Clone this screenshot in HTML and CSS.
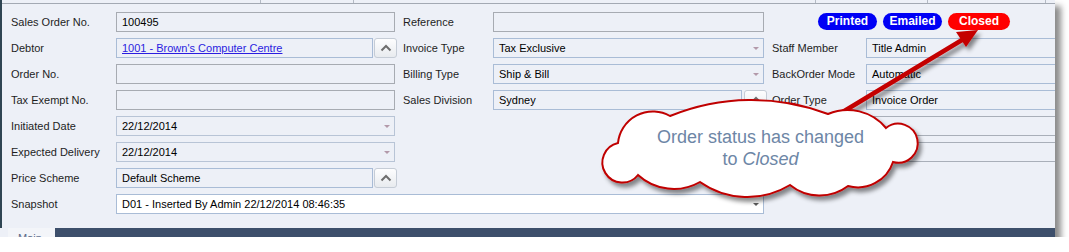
FILE: index.html
```html
<!DOCTYPE html>
<html>
<head>
<meta charset="utf-8">
<link rel="stylesheet" href="styles.css">
</head>
<body>
<div class="window">
  <div class="panel">
    <div class="tabtop">
      <span class="sep s1"></span><span class="sep s2"></span><span class="sep s3"></span><span class="sep s4"></span><span class="sep s5"></span>
    </div>
    <div class="form">
      <!-- row 1 -->
      <div class="lbl c1">Sales Order No.</div>
      <div class="box c2">100495</div>
      <div class="lbl c4">Reference</div>
      <div class="box c5"></div>
      <div class="badges">
        <span class="badge blue">Printed</span>
        <span class="badge blue">Emailed</span>
        <span class="badge red">Closed</span>
      </div>
      <!-- row 2 -->
      <div class="lbl c1">Debtor</div>
      <div class="c2 withbtn">
        <div class="box bl grow"><span class="link">1001 - Brown's Computer Centre</span></div>
        <div class="btn"><svg width="12" height="8" viewBox="0 0 12 8"><polyline points="1.5,6.5 6,2 10.5,6.5" fill="none" stroke="#6e6e6e" stroke-width="2"/></svg></div>
      </div>
      <div class="lbl c4">Invoice Type</div>
      <div class="box bl drop c5">Tax Exclusive</div>
      <div class="lbl c7">Staff Member</div>
      <div class="box bl c8">Title Admin</div>
      <!-- row 3 -->
      <div class="lbl c1">Order No.</div>
      <div class="box c2"></div>
      <div class="lbl c4">Billing Type</div>
      <div class="box bl drop c5">Ship &amp; Bill</div>
      <div class="lbl c7">BackOrder Mode</div>
      <div class="box bl c8">Automatic</div>
      <!-- row 4 -->
      <div class="lbl c1">Tax Exempt No.</div>
      <div class="box c2"></div>
      <div class="lbl c4">Sales Division</div>
      <div class="c5 withbtn">
        <div class="box bl grow">Sydney</div>
        <div class="btn"><svg width="12" height="8" viewBox="0 0 12 8"><polyline points="1.5,6.5 6,2 10.5,6.5" fill="none" stroke="#6e6e6e" stroke-width="2"/></svg></div>
      </div>
      <div class="lbl c7">Order Type</div>
      <div class="box bl c8">Invoice Order</div>
      <!-- row 5 -->
      <div class="lbl c1">Initiated Date</div>
      <div class="box lb drop c2">22/12/2014</div>
      <div class="lbl c7"></div>
      <div class="box gr c8"></div>
      <!-- row 6 -->
      <div class="lbl c1">Expected Delivery</div>
      <div class="box lb drop c2">22/12/2014</div>
      <div class="lbl c7"></div>
      <div class="box gr c8"></div>
      <!-- row 7 -->
      <div class="lbl c1">Price Scheme</div>
      <div class="c2 withbtn">
        <div class="box bl grow">Default Scheme</div>
        <div class="btn"><svg width="12" height="8" viewBox="0 0 12 8"><polyline points="1.5,6.5 6,2 10.5,6.5" fill="none" stroke="#6e6e6e" stroke-width="2"/></svg></div>
      </div>
      <!-- row 8 -->
      <div class="lbl c1">Snapshot</div>
      <div class="box bl white drop dark snap">D01 - Inserted By Admin 22/12/2014 08:46:35</div>
    </div>
  </div>
  <div class="tabbar">
    <span class="tabgap"></span>
    <span class="tab main">Main</span>
    <span class="rest"></span>
  </div>

  <svg class="overlay" width="1055" height="237" viewBox="0 0 1055 237">
    <defs>
      <filter id="sh" x="-20%" y="-20%" width="140%" height="160%">
        <feDropShadow dx="3" dy="4" stdDeviation="2" flood-color="#000" flood-opacity="0.45"/>
      </filter>
    </defs>
    <g filter="url(#sh)">
      <line x1="836" y1="116" x2="962" y2="40" stroke="#c40000" stroke-width="4.5" stroke-linecap="round"/>
      <polygon points="978,30 966,47 956,32" fill="#c40000"/>
    </g>
    <path filter="url(#sh)" fill="#fff" stroke="#c00000" stroke-width="2"
      d="M 618 143 A 35 35 0 0 1 670 116 A 215 215 0 0 1 828 114 A 50 50 0 0 1 886 128 A 19.5 19.5 0 1 1 893 162 A 37 37 0 0 1 848 186 A 47 47 0 0 1 790 185 A 82 82 0 0 1 700 182 A 53 53 0 0 1 638 175 A 20 20 0 1 1 618 143 Z"/>
  </svg>
  <div class="cloudtext">Order status has changed<br>to <i>Closed</i></div>
</div>
</body>
</html>
```

FILE: styles.css
```css
html, body {
  margin: 0;
  padding: 0;
  background: #ffffff;
}

body {
  font-family: "Liberation Sans", Arial, sans-serif;
  font-size: 11px;
  color: #1b1b1b;
}

.window {
  position: relative;
  width: 1055px;
  height: 237px;
  background: #edf0f7;
  box-shadow: 6px 6px 6px rgba(0, 0, 0, 0.45);
  overflow: hidden;
}

.panel {
  border-left: 2px solid #2f4553;
  height: 228px;
  box-sizing: border-box;
}

.tabtop {
  position: relative;
  height: 3px;
  border-bottom: 1px solid #a3a9b3;
}

.sep {
  position: absolute;
  top: 0;
  width: 1px;
  height: 3px;
  background: #b4bac4;
}
.s1 { left: 258px; }
.s2 { left: 351px; }
.s3 { left: 813px; }
.s4 { left: 925px; }
.s5 { left: 1043px; }

.form {
  display: grid;
  grid-template-columns: 105px 279px 8px 90px 271px 8px 94px 200px;
  grid-auto-rows: 20px;
  row-gap: 6px;
  padding: 8px 0 0 9px;
}

.c1 { grid-column: 1; }
.c2 { grid-column: 2; }
.c4 { grid-column: 4; }
.c5 { grid-column: 5; }
.c7 { grid-column: 7; }
.c8 { grid-column: 8; }
.snap { grid-column: 2 / span 4; }

.lbl {
  line-height: 20px;
  white-space: nowrap;
  color: #1e1e1e;
}

.box {
  position: relative;
  height: 20px;
  box-sizing: border-box;
  border: 1px solid #a7abb2;
  background: #edf0f7;
  padding-left: 5px;
  line-height: 18px;
  color: #000;
  white-space: nowrap;
  overflow: hidden;
}
.box.bl { border-color: #a9bcd6; }
.box.lb { border-color: #b8c4d6; }
.box.gr { border-color: #a9afb9; }
.box.white { background: #ffffff; }

.drop::after {
  content: "";
  position: absolute;
  right: 4px;
  top: 8px;
  border-left: 3px solid transparent;
  border-right: 3px solid transparent;
  border-top: 3px solid #b399aa;
}
.drop.dark::after {
  border-top-color: #5c5c5c;
}

.withbtn {
  display: flex;
  gap: 1px;
}
.grow {
  width: 257px;
  flex: none;
}
.c5.withbtn .grow {
  width: 249px;
}

.btn {
  flex: none;
  width: 23px;
  height: 20px;
  box-sizing: border-box;
  border: 1px solid #c5ccd6;
  border-radius: 3px;
  background: linear-gradient(#fdfdfe, #e8ebef);
  display: flex;
  align-items: center;
  justify-content: center;
}
.c5.withbtn .btn {
  margin-left: 1px;
}

.link {
  color: #2b1de0;
  text-decoration: underline;
}

.badges {
  grid-column: 7 / span 2;
  display: flex;
  gap: 6px;
  padding-left: 46px;
  padding-top: 1px;
  align-items: flex-start;
}

.badge {
  width: 59px;
  height: 17px;
  border-radius: 9px;
  color: #fff;
  font-weight: bold;
  font-size: 12px;
  line-height: 17px;
  text-align: center;
}
.badge.blue { background: #0000f5; }
.badge.red { background: #ff0000; width: 62px; }

.tabbar {
  display: flex;
  height: 9px;
  background: #3d4f6b;
  overflow: hidden;
}
.tabgap {
  width: 8px;
  background: #edf0f7;
}
.tab.main {
  width: 47px;
  background: #f3f5f9;
  color: #5a6a88;
  padding: 5px 0 0 10px;
  box-sizing: border-box;
  font-size: 11px;
  line-height: 11px;
}
.rest {
  flex: 1;
}

.overlay {
  position: absolute;
  left: 0;
  top: 0;
  pointer-events: none;
}

.cloudtext {
  position: absolute;
  left: 600px;
  top: 126px;
  width: 321px;
  text-align: center;
  font-size: 18px;
  line-height: 22px;
  color: #6d86a6;
}
.cloudtext i {
  font-style: italic;
}
```
